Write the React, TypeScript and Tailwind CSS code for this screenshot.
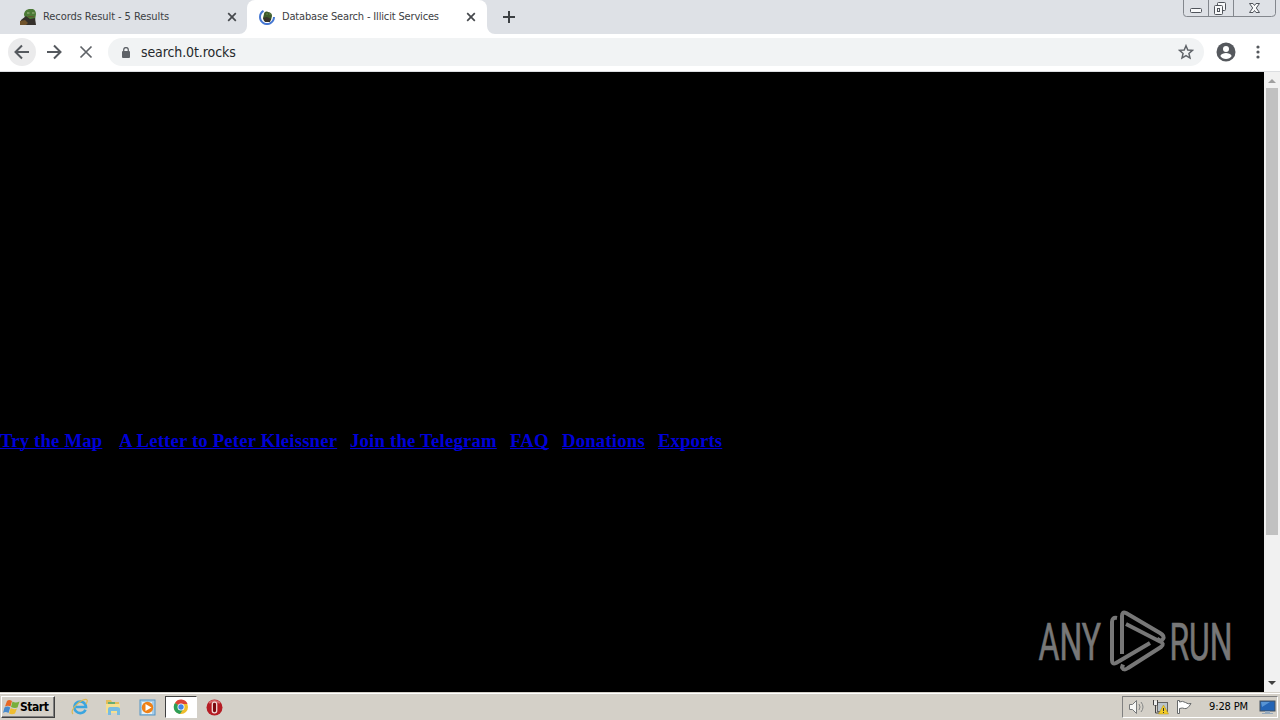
import React from "react";

const links = [
  { label: "Try the Map", className: "w-[102px] mr-[17px] tracking-[0.17px]" },
  { label: "A Letter to Peter Kleissner", className: "w-[218px] mr-[13px] tracking-[0.18px]" },
  { label: "Join the Telegram", className: "w-[147px] mr-[13px] tracking-[0.2px]" },
  { label: "FAQ", className: "w-[39px] mr-[13px] tracking-[0.25px]" },
  { label: "Donations", className: "w-[83px] mr-[13px] tracking-[0.2px]" },
  { label: "Exports", className: "w-[64px] tracking-[0.12px]" },
];

const CloseIcon = () => (
  <svg width="10" height="10" viewBox="0 0 10 10" className="shrink-0">
    <path d="M1.2 1.2l7.6 7.6M8.8 1.2L1.2 8.8" stroke="#45484c" strokeWidth="1.7" />
  </svg>
);

const FrogIcon = () => (
  <svg width="17" height="16" viewBox="0 0 17 16" className="shrink-0">
    <path d="M4 6C4 2 7 0 10 0c4-1 6 2 6 5l-1 6H6z" fill="#4c7a36" />
    <path d="M1 11l5-4 4 3 5-1 1 7H0z" fill="#35302b" />
    <path d="M0 12l5-1 3 3-2 2H0z" fill="#70532c" />
    <path d="M7 4h2.500M12 4h2.500" stroke="#a3b884" strokeWidth="1" />
    <path d="M8 7.500h6" stroke="#64582f" strokeWidth="1" />
  </svg>
);

const LoadingIcon = () => (
  <svg width="16" height="16" viewBox="0 0 16 16" className="shrink-0">
    <path d="M4.500 1.900A7 7 0 1 0 15 8" fill="none" stroke="#4577d2" strokeWidth="2" />
    <path d="M5 5c0-2 2-3 4-2 2 0 4 1 4 4l-1 4-3 2-4-1-1-3z" fill="#3d5b2b" />
    <path d="M4 9l4-1 4 2-1 3H6z" fill="#37332b" />
    <path d="M7 5h2M10 5h2" stroke="#6b8550" />
  </svg>
);

const WindowControls = () => (
  <svg width="94" height="18" viewBox="0 0 94 18" className="shrink-0">
    <path
      d="M.5 0v13.5q0 3 3 3h85q4 0 4-3V0M25.5 0v16M50.5 0v16"
      fill="none"
      stroke="#83878d"
    />
    <g fill="#f8f9fa" stroke="#50545b">
      <rect x="7.5" y="8.5" width="11" height="4" rx="1" />
      <rect x="34.5" y="2.5" width="8" height="8" rx="1" />
      <rect x="31.5" y="5.5" width="8" height="9" rx="1" />
      <rect x="34.5" y="8.5" width="2" height="3" />
      <path d="M66.500 3.500h3.500l1.500 2 1.500-2h3.500l-3.200 4.500 3.200 4.500H73l-1.500-2-1.500 2h-3.500l3.200-4.500z" />
    </g>
  </svg>
);

const TabStrip = () => (
  <div className="flex h-[34px] bg-[#dee1e6] text-[11px] text-[#3c4043]">
    <div className="flex w-[247px] items-center pl-5 pr-[10px]">
      <FrogIcon />
      <span className="ml-[6px] w-[184px] whitespace-nowrap tracking-[-0.07px]">
        Records Result - 5 Results
      </span>
      <CloseIcon />
    </div>
    <div className="relative flex w-[240px] items-center rounded-t-lg bg-white pl-3 pr-[11px]">
      <svg width="8" height="8" className="absolute -left-2 bottom-0">
        <path d="M8 0v8H0a8 8 0 0 0 8-8" fill="white" />
      </svg>
      <LoadingIcon />
      <span className="ml-[7px] w-[184px] whitespace-nowrap tracking-[-0.16px]">
        Database Search - Illicit Services
      </span>
      <CloseIcon />
      <svg width="8" height="8" className="absolute -right-2 bottom-0">
        <path d="M0 0v8h8a8 8 0 0 1-8-8" fill="white" />
      </svg>
    </div>
    <div className="flex w-[44px] items-center justify-center">
      <svg width="12" height="12" viewBox="0 0 12 12">
        <path d="M6 0v12M0 6h12" stroke="#3c4043" strokeWidth="2" />
      </svg>
    </div>
    <div className="ml-auto mr-[3px]">
      <WindowControls />
    </div>
  </div>
);

const Toolbar = () => (
  <div className="flex h-[38px] items-center border-b border-[#dcdee1] bg-white pb-px pl-2">
    <div className="flex h-7 w-7 items-center justify-center rounded-full bg-[#ebebec]">
      <svg width="16" height="16" viewBox="0 0 16 16">
        <path d="M15 8H2M8 1.500L1.500 8 8 14.500" fill="none" stroke="#55595e" strokeWidth="2" />
      </svg>
    </div>
    <svg width="16" height="16" viewBox="0 0 16 16" className="ml-[10px]">
      <path d="M1 8h13M8 1.500L14.500 8 8 14.500" fill="none" stroke="#55595e" strokeWidth="2" />
    </svg>
    <svg width="14" height="14" viewBox="0 0 14 14" className="ml-[17px]">
      <path d="M1.500 1.500l11 11M12.500 1.500l-11 11" stroke="#5f6368" strokeWidth="1.7" />
    </svg>
    <div className="ml-[15px] flex h-7 w-[1096px] items-center rounded-full bg-[#f1f3f4] pl-[14px] pr-[10px]">
      <svg width="8" height="11" viewBox="0 0 8 11">
        <rect y="4" width="8" height="7" rx="1" fill="#5f6368" />
        <path d="M1.700 4V2.800a2.300 2.300 0 0 1 4.600 0V4" fill="none" stroke="#5f6368" strokeWidth="1.3" />
      </svg>
      <span className="ml-[11px] text-[14px] tracking-[-0.1px] text-[#25282b]">search.0t.rocks</span>
      <svg width="16" height="16" viewBox="0 0 24 24" className="ml-auto">
        <path
          d="M12 2.500l2.700 6.400 7 .6-5.300 4.600 1.600 6.900-6-3.700L6 21l1.600-6.900-5.300-4.600 7-.6z"
          fill="none"
          stroke="#5f6368"
          strokeWidth="2.200"
        />
      </svg>
    </div>
    <svg width="20" height="20" viewBox="0 0 20 20" className="ml-3">
      <circle cx="10" cy="10" r="9.500" fill="#55585d" />
      <circle cx="10" cy="7" r="3" fill="white" />
      <path d="M4.300 14c1-2.200 3.500-3 5.700-3s4.700.8 5.700 3c-1.200 1.800-3.200 3-5.700 3s-4.500-1.200-5.700-3" fill="white" />
    </svg>
    <svg width="4" height="14" viewBox="0 0 4 14" className="ml-5">
      <g fill="#55585d">
        <circle cx="2" cy="2" r="1.600" />
        <circle cx="2" cy="7" r="1.600" />
        <circle cx="2" cy="12" r="1.600" />
      </g>
    </svg>
  </div>
);

const Watermark = () => (
  <svg width="206" height="70" viewBox="0 0 206 70" className="absolute bottom-[13px] right-[20px]">
    <g
      fill="#777"
      stroke="#777"
      strokeWidth=".7"
      fontFamily="Roboto, sans-serif"
      fontSize="52"
      transform="scale(.6 1)"
    >
      <text x="1" y="51" textLength="104" lengthAdjust="spacingAndGlyphs">
        ANY
      </text>
      <text x="219" y="51" textLength="105" lengthAdjust="spacingAndGlyphs">
        RUN
      </text>
    </g>
    <g fill="none" stroke="#777" strokeWidth="4" strokeLinejoin="round">
      <path d="M79 9q-5-1-5 4v38q0 5 4 3l34-20" />
      <path d="M84 45V7q0-5 4-3l34 20q5 3 3 6-2 3-6-.500" />
      <path d="M88 15l34 17.500q5 2 1 5.500L90 59q-4 3-6-.500l1-3" />
    </g>
  </svg>
);

const Scrollbar = () => (
  <div className="flex w-4 flex-col items-center bg-[#f1f1f1]">
    <div className="flex h-4 items-center">
      <svg width="8" height="4" className="mt-[2px]">
        <path d="M0 4l4-4 4 4z" fill="#a0a0a0" />
      </svg>
    </div>
    <div className="h-[447px] w-3 bg-[#c1c1c1]" />
    <svg width="8" height="4" className="mb-[7px] mt-auto">
      <path d="M0 0h8L4 4z" fill="#404040" />
    </svg>
  </div>
);

const StartFlag = () => (
  <svg width="17" height="16" viewBox="0 0 17 16" className="shrink-0">
    <path d="M4 2q2-2 5 0L7.500 7.500Q5 6 2 7.500z" fill="#e76724" />
    <path d="M9.500 2.500q3 2 7 0l-2 6q-3 1-6.500-.500z" fill="#78af3b" />
    <path d="M1.500 8.500q3-2 5.700 0l-1.700 5.500q-3-2-5.500 0z" fill="#478acc" />
    <path d="M7.700 9q3 2 6.300.500l-2 5q-3 1.500-6 0z" fill="#efbd30" />
  </svg>
);

const QuickLaunch = () => (
  <div className="flex items-center">
    <svg width="18" height="18" viewBox="0 0 18 18" className="ml-[16px]">
      <path d="M14.500 11.700A5.800 5.800 0 1 1 15 9H5" fill="none" stroke="#3ba5df" strokeWidth="2.600" />
      <path d="M2 16C-1 13 5 5 12 2c5-2 5 1 3 4" fill="none" stroke="#dfb952" strokeWidth="1.200" />
    </svg>
    <svg width="18" height="18" viewBox="0 0 18 18" className="ml-[15px]">
      <path d="M2 2h5l1 2h7v10H2z" fill="#e3bd5b" />
      <path d="M4 4h7v3H4z" fill="#68ad72" />
      <path d="M2 6h14v9H2z" fill="#f5df91" />
      <path d="M4 17v-6q0-2 2-2h7q3 0 3 2v6h-3v-4H7v4z" fill="#77bce2" />
    </svg>
    <svg width="17" height="17" viewBox="0 0 17 17" className="ml-[17px]">
      <rect x="1" y="1" width="15" height="15" fill="#a9cee8" stroke="#5595c5" />
      <rect x="3" y="3" width="10" height="12" fill="#e6f2f8" />
      <circle cx="8.500" cy="8.500" r="5.700" fill="#ef8117" />
      <path d="M6.500 5l6 3.500-6 3.500z" fill="white" />
    </svg>
    <div className="ml-[9px] flex h-[22px] w-8 items-center justify-center border border-b-white border-l-[#404040] border-r-white border-t-[#404040] bg-white">
      <svg width="16" height="16" viewBox="0 0 16 16">
        <circle cx="8" cy="8" r="7" fill="#efbd2c" />
        <path d="M8 8L2 4a7 7 0 0 1 12.500 1H8z" fill="#dc4437" />
        <path d="M2 4a7 7 0 0 0 5 11l4-6-3-1z" fill="#2d9e57" />
        <circle cx="8" cy="8" r="3.500" fill="white" />
        <circle cx="8" cy="8" r="2.700" fill="#4285e8" />
      </svg>
    </div>
    <svg width="17" height="17" viewBox="0 0 17 17" className="ml-[9px]">
      <circle cx="8.500" cy="8.500" r="8" fill="#b51c24" />
      <path d="M3 4q5-4 11 0" fill="none" stroke="#d76769" strokeWidth="2" />
      <rect x="6.300" y="3.200" width="4.400" height="10.600" rx="2" fill="#7b090f" stroke="#f2dcda" strokeWidth="1.300" />
    </svg>
  </div>
);

const Tray = () => (
  <div className="ml-auto mr-[2px] flex h-[22px] w-[156px] items-center border border-b-white border-l-[#808080] border-r-white border-t-[#808080] pl-[5px]">
    <svg width="18" height="16" viewBox="0 0 18 16">
      <path d="M1.500 5.500h3l4-4v13l-4-4h-3z" fill="#f7f7f5" stroke="#77797a" />
      <path d="M11 5q2 3 0 6M13 3q4 5 0 10" fill="none" stroke="#858787" />
    </svg>
    <svg width="17" height="16" viewBox="0 0 17 16" className="ml-[6px]">
      <rect x="5.500" y="3.500" width="10" height="9" fill="#bac4cb" stroke="#666" />
      <path d="M1.500 1v5h4V1M3.500 6v8h4" fill="none" stroke="#444" />
      <path d="M2 2h3v4H2z" fill="#eee" />
      <path d="M11.500 6l5 9h-10z" fill="#f3cc26" stroke="#b29113" strokeWidth=".5" />
      <path d="M11.500 9v3M11.500 13v1" stroke="#333" />
    </svg>
    <svg width="17" height="16" viewBox="0 0 17 16" className="ml-[7px]">
      <path d="M1.500 1.500v13h2v-5q3-1 5 0 3 1 6.500-5-3 1-5.500-1-3-2-6-.500v-1.500z" fill="#fff" stroke="#66696a" />
    </svg>
    <span className="ml-[16px] w-[40px] whitespace-nowrap text-[11px] tracking-[-0.12px] text-black">9:28 PM</span>
    <svg width="17" height="15" viewBox="0 0 17 15" className="ml-[10px]">
      <rect x="1" y="1" width="15" height="10" fill="#2364b5" stroke="#45515e" />
      <path d="M2 2h9L3 7z" fill="#5794d4" />
      <path d="M6 11h5v2h3v1H3v-1h3z" fill="#96a9bb" />
    </svg>
  </div>
);

const App = () => {
  return (
    <div className="flex h-[720px] w-[1280px] flex-col overflow-hidden font-['DejaVu_Sans_Condensed','DejaVu_Sans',sans-serif]">
      <TabStrip />
      <Toolbar />
      {/* Page */}
      <div className="flex h-[620px]">
        <main className="relative flex flex-1 items-start bg-black pt-[358px]">
          <nav className="flex whitespace-nowrap font-['Liberation_Serif',serif] text-[18.72px] font-bold leading-[22px] text-[#0000d8]">
            {links.map((link) => (
              <a key={link.label} href="#" className={`underline decoration-1 [text-decoration-skip-ink:none] ${link.className}`}>
                {link.label}
              </a>
            ))}
          </nav>
          <Watermark />
        </main>
        <Scrollbar />
      </div>
      {/* Taskbar */}
      <div className="flex h-7 items-center border-t border-[#d4d0c8] bg-[#d4d0c8] pt-px shadow-[inset_0_1px_0_white]">
        <div className="ml-px flex h-[22px] w-[54px] items-center border border-b-[#404040] border-l-white border-r-[#404040] border-t-white pl-px shadow-[inset_-1px_-1px_0_#808080]">
          <StartFlag />
          <span className="text-[12px] font-bold tracking-[-0.45px] text-black">Start</span>
        </div>
        <QuickLaunch />
        <Tray />
      </div>
    </div>
  );
};

export default App;
